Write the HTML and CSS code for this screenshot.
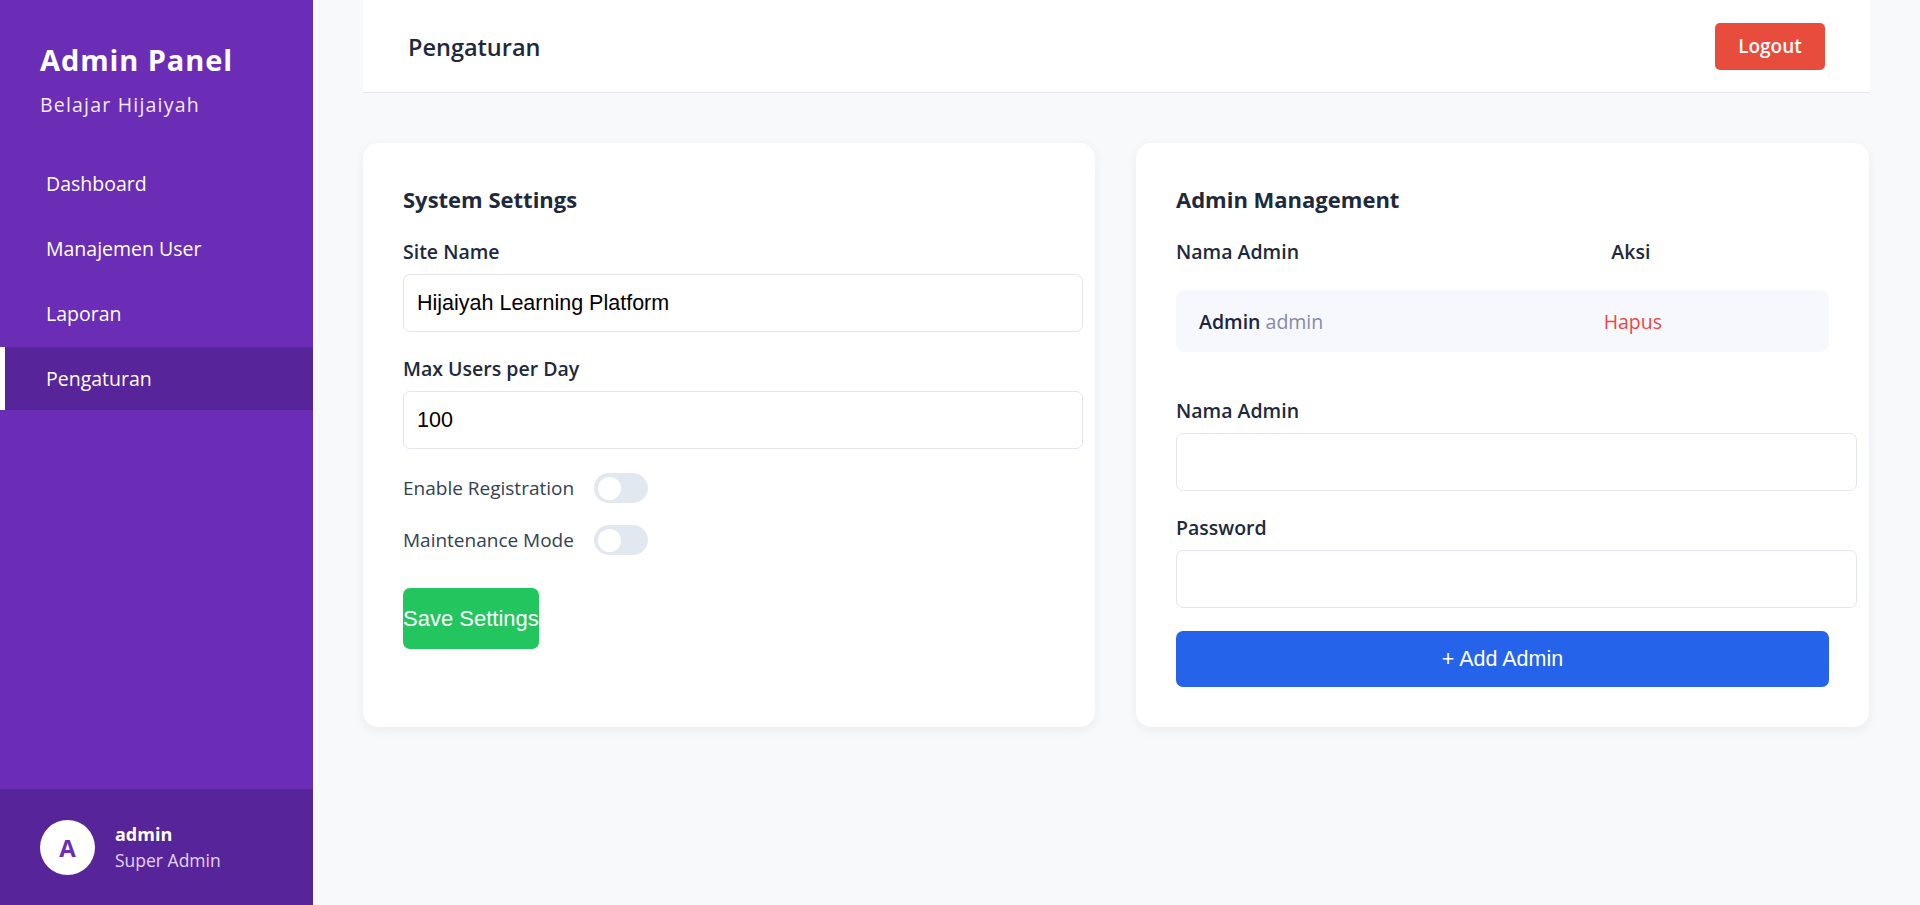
FILE: index.html
```html
<!DOCTYPE html>
<html lang="id">
<head>
<meta charset="utf-8">
<title>Pengaturan - Admin Panel</title>
<link rel="stylesheet" href="styles.css">
</head>
<body>
<div class="layout">
  <aside class="sidebar">
    <div class="brand">
      <h1 class="brand-title">Admin Panel</h1>
      <p class="brand-sub">Belajar Hijaiyah</p>
    </div>
    <nav class="nav">
      <a class="nav-item" href="#">Dashboard</a>
      <a class="nav-item" href="#">Manajemen User</a>
      <a class="nav-item" href="#">Laporan</a>
      <a class="nav-item active" href="#">Pengaturan</a>
    </nav>
    <div class="user">
      <div class="avatar">A</div>
      <div class="user-info">
        <div class="user-name">admin</div>
        <div class="user-role">Super Admin</div>
      </div>
    </div>
  </aside>

  <main class="main">
    <header class="topbar">
      <h2 class="page-title">Pengaturan</h2>
      <button class="btn-logout" type="button">Logout</button>
    </header>

    <section class="cards">
      <div class="card">
        <h3 class="card-title">System Settings</h3>
        <div class="form-group">
          <label class="label">Site Name</label>
          <input class="input" type="text" value="Hijaiyah Learning Platform">
        </div>
        <div class="form-group">
          <label class="label">Max Users per Day</label>
          <input class="input" type="text" value="100">
        </div>
        <div class="toggle-row">
          <span class="toggle-label">Enable Registration</span>
          <span class="toggle"><span class="knob"></span></span>
        </div>
        <div class="toggle-row">
          <span class="toggle-label">Maintenance Mode</span>
          <span class="toggle"><span class="knob"></span></span>
        </div>
        <button class="btn-save" type="button">Save Settings</button>
      </div>

      <div class="card">
        <h3 class="card-title">Admin Management</h3>
        <div class="table-head">
          <span>Nama Admin</span>
          <span>Aksi</span>
        </div>
        <div class="table-row">
          <span><strong class="admin-name">Admin</strong> <span class="admin-user">admin</span></span>
          <span class="delete">Hapus</span>
        </div>
        <div class="form-group spaced">
          <label class="label">Nama Admin</label>
          <input class="input" type="text">
        </div>
        <div class="form-group">
          <label class="label">Password</label>
          <input class="input" type="password">
        </div>
        <button class="btn-add" type="button">+ Add Admin</button>
      </div>
    </section>
  </main>
</div>
</body>
</html>
```

FILE: styles.css
```css
* { box-sizing: content-box; }

html, body {
  margin: 0;
  padding: 0;
}

body {
  font-family: "Open Sans", "Noto Sans", sans-serif;
  background: #f8f9fb;
  color: #1e293b;
}

.layout {
  display: flex;
  min-height: 100vh;
}

/* Sidebar */
.sidebar {
  width: 313px;
  flex-shrink: 0;
  height: 100vh;
  background: #6b2db6;
  color: #fff;
  display: flex;
  flex-direction: column;
}

.brand {
  padding: 42px 40px 0 40px;
}

.brand-title {
  margin: 0;
  font-size: 29px;
  line-height: 35px;
  font-weight: 700;
  letter-spacing: 0.9px;
}

.brand-sub {
  margin: 16px 0 0 0;
  font-size: 19.5px;
  line-height: 24px;
  letter-spacing: 1.2px;
  color: #f1eafb;
}

.nav {
  margin-top: 35px;
  display: flex;
  flex-direction: column;
}

.nav-item {
  display: block;
  height: 29px;
  line-height: 29px;
  padding: 17px 0 17px 41px;
  margin-bottom: 2px;
  border-left: 5px solid transparent;
  color: #fff;
  font-size: 19.5px;
  text-decoration: none;
}

.nav-item.active {
  background: #58249a;
  border-left-color: #fff;
}

.user {
  margin-top: auto;
  height: 116px;
  padding: 0 40px;
  background: #58249a;
  display: flex;
  align-items: center;
  gap: 20px;
}

.avatar {
  width: 55px;
  height: 55px;
  border-radius: 50%;
  background: #fff;
  color: #6b2db6;
  font-weight: 700;
  font-size: 24px;
  display: flex;
  align-items: center;
  justify-content: center;
}

.user-name {
  font-size: 18px;
  line-height: 26px;
  font-weight: 700;
}

.user-role {
  font-size: 17.5px;
  line-height: 26px;
  color: #e2d3f7;
}

/* Main */
.main {
  flex: 1;
  min-width: 0;
  padding: 0 50px;
}

.topbar {
  height: 92px;
  border-bottom: 1px solid #e5e7eb;
  background: #fff;
  padding: 0 45px;
  display: flex;
  align-items: center;
  justify-content: space-between;
}

.page-title {
  margin: 2px 0 0 0;
  font-size: 23.5px;
  font-weight: 600;
  color: #1e293b;
}

.btn-logout {
  width: 110px;
  height: 47px;
  border: 0;
  border-radius: 5px;
  background: #e74c3c;
  color: #fff;
  font-family: "Open Sans", sans-serif;
  font-size: 19px;
  font-weight: 600;
  padding: 0;
}

.cards {
  margin-top: 50px;
  display: grid;
  grid-template-columns: 732px 733px;
  gap: 41px;
}

.card {
  background: #fff;
  border-radius: 15px;
  padding: 40px;
  box-shadow: 0 3px 12px rgba(15, 23, 42, 0.06);
}

.card-title {
  margin: 0 0 23px 0;
  font-size: 22px;
  line-height: 33px;
  font-weight: 700;
  color: #1e293b;
}

.form-group {
  margin-bottom: 24px;
}

.form-group.spaced {
  margin-top: 46px;
}

.label {
  display: block;
  margin-bottom: 9px;
  font-size: 19.5px;
  line-height: 26px;
  font-weight: 600;
  color: #1e293b;
}

.input {
  display: block;
  width: 100%;
  height: 56px;
  padding: 0 13px;
  border: 1px solid #e3e6ef;
  border-radius: 7px;
  font-family: "Liberation Sans", Arial, sans-serif;
  font-size: 21.5px;
  color: #000;
  background: #fff;
  outline: none;
}

.toggle-row {
  display: flex;
  align-items: center;
  height: 30px;
  margin-bottom: 22px;
}

.toggle-label {
  font-size: 19px;
  line-height: 26px;
  color: #334155;
}

.toggle {
  margin-left: 20px;
  width: 54px;
  height: 30px;
  border-radius: 15px;
  background: #e2e8f0;
  display: flex;
  align-items: center;
  padding: 0;
}

.knob {
  width: 23px;
  height: 23px;
  margin-left: 4px;
  border-radius: 50%;
  background: #fff;
}

.btn-save {
  margin-top: 11px;
  height: 61px;
  padding: 0;
  border: 0;
  border-radius: 7px;
  background: #22c55e;
  color: #fff;
  font-family: "Liberation Sans", Arial, sans-serif;
  font-size: 22px;
}

.table-head {
  display: grid;
  grid-template-columns: 2fr 1fr;
  font-size: 19.5px;
  line-height: 26px;
  font-weight: 600;
  color: #1e293b;
}

.table-row {
  margin-top: 25px;
  height: 62px;
  padding: 0 23px;
  border-radius: 9px;
  background: #f6f8fd;
  display: grid;
  grid-template-columns: 2fr 1fr;
  align-items: center;
  font-size: 19.5px;
}

.admin-name {
  font-weight: 600;
  color: #1e2340;
}

.admin-user {
  color: #858aa6;
}

.delete {
  color: #ef4444;
}

.btn-add {
  display: block;
  width: 100%;
  height: 56px;
  margin-top: -1px;
  padding: 0;
  border: 0;
  border-radius: 7px;
  background: #2563eb;
  color: #fff;
  font-family: "Liberation Sans", Arial, sans-serif;
  font-size: 21.5px;
}
```
